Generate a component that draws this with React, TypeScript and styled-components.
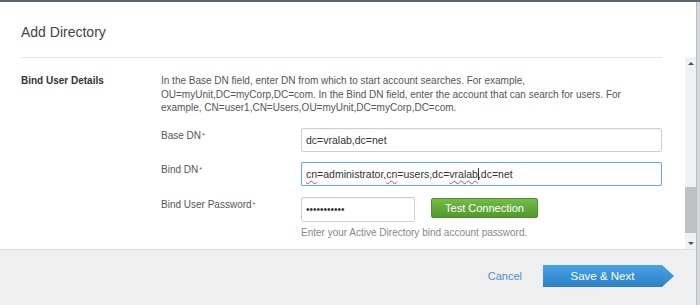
import React from "react";
import styled, { createGlobalStyle } from "styled-components";

const Global = createGlobalStyle`
  html, body { margin: 0; padding: 0; background: #d6d9dc; }
  body { font-family: "Liberation Sans", Arial, sans-serif; }
  * { box-sizing: border-box; }
`;

const Page = styled.div`
  width: 700px;
  height: 305px;
  display: flex;
  flex-direction: column;
  overflow: hidden;
  background: #d6d9dc;
`;

const TopEdge = styled.div`
  height: 2px;
  background: #5b6770;
  flex: none;
`;

const Modal = styled.div`
  width: 697px;
  flex: 1;
  display: flex;
  flex-direction: column;
  background: #fff;
  border-right: 1px solid #b9bdc1;
`;

const Header = styled.div`
  height: 55px;
  padding: 22px 0 0 21px;
  font-size: 14px;
  line-height: 16px;
  color: #444;
  flex: none;
`;

const Body = styled.div`
  height: 192px;
  display: flex;
  flex: none;
`;

const Content = styled.div`
  flex: 1;
  padding: 0 23px 0 21px;
`;

const Divider = styled.div`
  height: 1px;
  background: #e4e4e4;
`;

const Section = styled.div`
  display: grid;
  grid-template-columns: 140px 1fr;
  padding-top: 16px;
`;

const SectionTitle = styled.div`
  font-size: 10px;
  font-weight: bold;
  color: #333;
  line-height: 13.5px;
`;

const Description = styled.p`
  margin: 0 0 13.5px;
  font-size: 10px;
  line-height: 13.5px;
  color: #555;
`;

const Row = styled.div<{ $gap?: number }>`
  display: grid;
  grid-template-columns: 140px 1fr;
  margin-bottom: ${(p) => p.$gap ?? 10}px;
`;

const Label = styled.div`
  font-size: 10px;
  color: #555;
  padding-top: 2px;
  line-height: 12px;
`;

const Req = styled.span`
  color: #d9363e;
  font-size: 8px;
  vertical-align: top;
  margin-left: 1px;
`;

const Input = styled.div<{ $focused?: boolean; $width?: number; $height?: number }>`
  height: ${(p) => p.$height ?? 24}px;
  width: ${(p) => (p.$width ? `${p.$width}px` : "100%")};
  border: 1px solid ${(p) => (p.$focused ? "#5fb0ea" : "#d0d0d0")};
  box-shadow: ${(p) => (p.$focused ? "0 0 1px #8cc6f0" : "inset 0 1px 1px rgba(0,0,0,0.04)")};
  border-radius: 2px;
  padding: 0 4px;
  display: flex;
  align-items: center;
  font-size: 10.5px;
  color: #333;
  background: #fff;
  white-space: nowrap;
`;

const Typo = styled.span`
  text-decoration: underline wavy #e04040;
  text-decoration-thickness: 1px;
  text-underline-offset: 2px;
`;

const Caret = styled.span`
  display: inline-block;
  width: 1px;
  height: 12px;
  background: #333;
  margin-right: -1px;
`;

const Dots = styled.span`
  font-size: 10px;
  letter-spacing: 0;
  color: #333;
`;

const FieldLine = styled.div`
  display: flex;
  align-items: flex-start;
  gap: 16px;
`;

const FieldCol = styled.div`
  display: flex;
  flex-direction: column;
`;

const GreenButton = styled.button`
  width: 107px;
  height: 20px;
  margin-top: 1px;
  border: 1px solid #4d8f2c;
  border-radius: 2px;
  background: linear-gradient(#76ba4a, #4f9a2c);
  color: #fff;
  font-family: "Liberation Sans", Arial, sans-serif;
  font-size: 11px;
  padding: 0;
`;

const Help = styled.div`
  font-size: 10px;
  line-height: 12px;
  color: #888;
  margin-top: 5px;
`;

const Scrollbar = styled.div`
  width: 11px;
  background: #f1f1f1;
  display: flex;
  flex-direction: column;
  align-items: center;
`;

const Arrow = styled.div<{ $down?: boolean }>`
  height: 12px;
  display: flex;
  align-items: center;
  justify-content: center;
  &::after {
    content: "";
    border-left: 3px solid transparent;
    border-right: 3px solid transparent;
    ${(p) => (p.$down ? "border-top: 3px solid #505050;" : "border-bottom: 3px solid #505050;")}
  }
`;

const Track = styled.div`
  flex: 1;
  width: 100%;
  display: flex;
  flex-direction: column;
  justify-content: flex-end;
  padding-bottom: 4px;
`;

const Thumb = styled.div`
  height: 46px;
  width: 100%;
  background: #c1c1c1;
`;

const Footer = styled.div`
  flex: 1;
  background: #efefef;
  border-top: 1px solid #dedede;
  display: flex;
  align-items: flex-start;
  justify-content: flex-end;
  padding: 15px 22px 0 0;
`;

const Cancel = styled.a`
  font-size: 11px;
  line-height: 13px;
  color: #4a8fcc;
  margin: 5px 21px 0 0;
  cursor: pointer;
`;

const SaveButton = styled.button`
  width: 131px;
  height: 22px;
  border: none;
  padding: 0 12px 0 0;
  background: linear-gradient(#48a3e2, #2b80c9);
  clip-path: polygon(0 0, 119px 0, 131px 50%, 119px 100%, 0 100%);
  color: #fff;
  font-family: "Liberation Sans", Arial, sans-serif;
  font-size: 11.5px;
`;

export default function App() {
  return (
    <Page>
      <Global />
      <TopEdge />
      <Modal>
        <Header>Add Directory</Header>
        <Body>
          <Content>
            <Divider />
            <Section>
              <SectionTitle>Bind User Details</SectionTitle>
              <div>
                <Description>
                  In the Base DN field, enter DN from which to start account searches. For example,
                  OU=myUnit,DC=myCorp,DC=com. In the Bind DN field, enter the account that can search
                  for users. For example, CN=user1,CN=Users,OU=myUnit,DC=myCorp,DC=com.
                </Description>
                <Row>
                  <Label>
                    Base DN<Req>*</Req>
                  </Label>
                  <Input>dc=vralab,dc=net</Input>
                </Row>
                <Row $gap={11}>
                  <Label>
                    Bind DN<Req>*</Req>
                  </Label>
                  <Input $focused>
                    <Typo>cn</Typo>=administrator,<Typo>cn</Typo>=users,dc=<Typo>vralab</Typo>
                    <Caret />,dc=net
                  </Input>
                </Row>
                <Row>
                  <Label>
                    Bind User Password<Req>*</Req>
                  </Label>
                  <FieldCol>
                    <FieldLine>
                      <Input $width={114} $height={25}>
                        <Dots>•••••••••••</Dots>
                      </Input>
                      <GreenButton>Test Connection</GreenButton>
                    </FieldLine>
                    <Help>Enter your Active Directory bind account password.</Help>
                  </FieldCol>
                </Row>
              </div>
            </Section>
          </Content>
          <Scrollbar>
            <Arrow />
            <Track>
              <Thumb />
            </Track>
            <Arrow $down />
          </Scrollbar>
        </Body>
        <Footer>
          <Cancel>Cancel</Cancel>
          <SaveButton>Save &amp; Next</SaveButton>
        </Footer>
      </Modal>
    </Page>
  );
}
